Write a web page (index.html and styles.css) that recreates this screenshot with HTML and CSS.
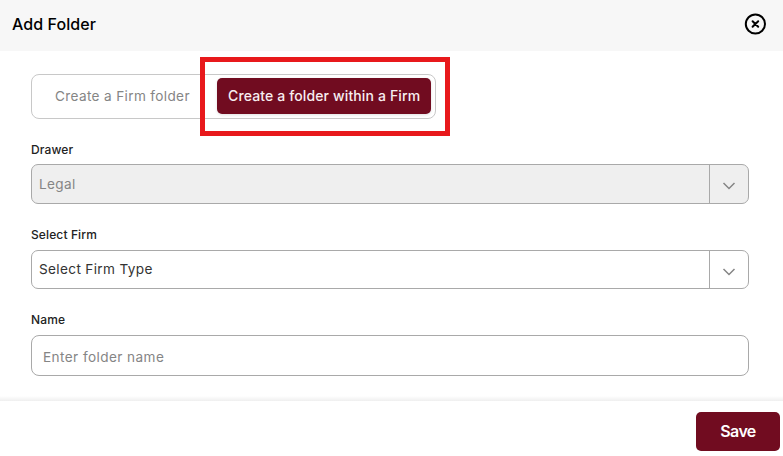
FILE: index.html
```html
<!DOCTYPE html>
<html lang="en">
<head>
<meta charset="utf-8">
<title>Add Folder</title>
<link rel="stylesheet" href="styles.css">
</head>
<body>
<div class="dialog">
  <header class="header">
    <h1 class="title">Add Folder</h1>
    <svg class="close" viewBox="0 0 22 22" fill="none" stroke="#000" stroke-width="2"><circle cx="11.4" cy="11" r="9.6"/><path d="M8.6 8.2l5.6 5.6M14.2 8.2l-5.6 5.6" stroke-linecap="round"/></svg>
  </header>
  <main class="content">
    <div class="tabs">
      <div class="tab">Create a Firm folder</div>
      <div class="tab tab-active">Create a folder within a Firm</div>
      <div class="highlight"></div>
    </div>
    <div class="label">Drawer</div>
    <div class="select select-disabled">
      <div class="value">Legal</div>
      <div class="arrow"><svg class="chevron" viewBox="0 0 14 8"><path d="M1.5 1L7 6.5L12.5 1"/></svg></div>
    </div>
    <div class="label">Select Firm</div>
    <div class="select select-firm">
      <div class="value">Select Firm Type</div>
      <div class="arrow"><svg class="chevron" viewBox="0 0 14 8"><path d="M1.5 1L7 6.5L12.5 1"/></svg></div>
    </div>
    <div class="label">Name</div>
    <div class="input">Enter folder name</div>
  </main>
  <footer class="footer"><div class="save">Save</div></footer>
</div>
</body>
</html>
```

FILE: styles.css
```css
* { box-sizing: border-box; }
body { margin: 0; background: #fff; font-family: Inter, "Liberation Sans", sans-serif; }
.dialog { width: 783px; height: 456px; display: flex; flex-direction: column; overflow: hidden; white-space: nowrap; }
.header { height: 51px; flex: none; display: flex; align-items: center; justify-content: space-between; padding: 0 17px 3px 12px; background: #f7f7f7; }
.title { margin: 0; font-size: 16px; line-height: 20px; font-weight: 500; letter-spacing: .08px; color: #000; }
.close { width: 22px; height: 22px; overflow: visible; }
.content { height: 350px; flex: none; padding: 23px 34px 0 31px; background: linear-gradient(to top, #efefef, #fff 5px); }
.tabs { position: relative; width: 405px; height: 45px; display: flex; justify-content: space-between; padding: 3px 4px; border: 1px solid #c8c8c8; border-radius: 8px; margin-bottom: 21px; }
.tab { height: 36px; line-height: 36px; padding-left: 19px; font-size: 13.6px; letter-spacing: .35px; color: #858585; }
.tab-active { width: 214px; padding-left: 11px; background: #710c20; border-radius: 5px; color: #f7eef0; font-size: 14px; letter-spacing: .13px; font-weight: 500; box-shadow: 0 1px 3px rgba(0, 0, 0, .12); }
.highlight { position: absolute; left: 167.5px; top: -18px; width: 250px; height: 78.5px; border: 5px solid #e8191c; }
.label { height: 20px; line-height: 20px; margin-bottom: 4px; font-size: 12px; font-weight: 500; letter-spacing: .12px; color: #222; }
.select { height: 40px; display: flex; border: 1px solid #a9a9a9; border-radius: 7px; margin-bottom: 21px; color: #333; }
.select-disabled { background: #efefef; color: #858585; }
.select-disabled + .label, .select-firm + .label { margin-bottom: 5px; }
.select-firm { height: 39px; margin-bottom: 21px; }
.value { flex: 1; padding-left: 7px; font-size: 13.6px; letter-spacing: .35px; line-height: 38px; }
.select-firm .value { line-height: 36px; }
.arrow { width: 39px; border-left: 1px solid #a9a9a9; display: flex; align-items: center; justify-content: center; padding-top: 4px; }
.chevron { width: 14px; height: 8px; fill: none; stroke: #858585; stroke-width: 1.5; }
.input { height: 41px; border: 1px solid #a9a9a9; border-radius: 8px; padding: 1px 11px 0; line-height: 40px; font-size: 13.6px; letter-spacing: .42px; color: #858585; }
.footer { flex: 1; display: flex; justify-content: flex-end; padding: 11px 3px 0; background: #fff; }
.save { width: 84px; height: 39px; background: #710c20; border-radius: 5px; color: #fff; font-size: 16px; font-weight: 600; letter-spacing: -.6px; line-height: 38px; text-align: center; }
```
